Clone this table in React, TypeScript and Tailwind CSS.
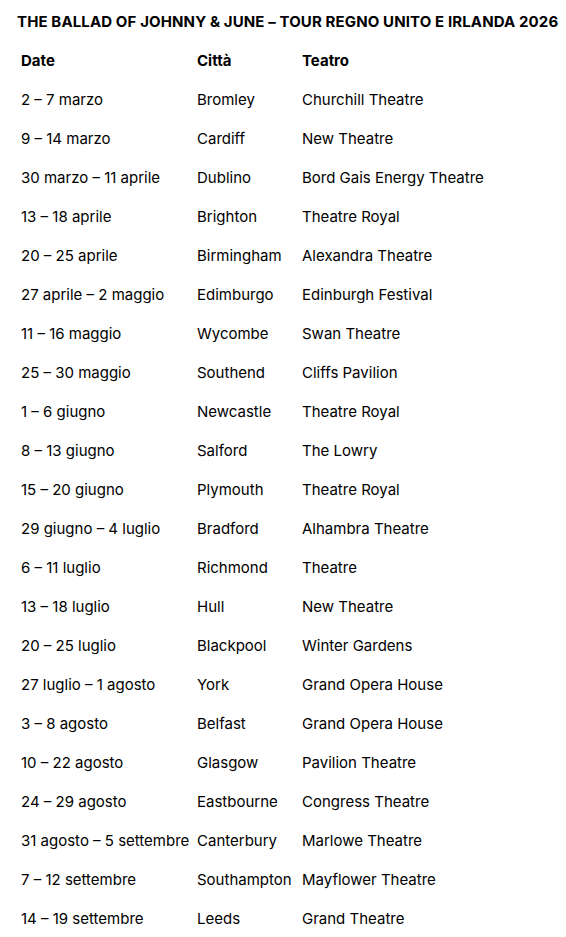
import React from 'react';

const tour: [string, string, string][] = [
    ['2 – 7 marzo', 'Bromley', 'Churchill Theatre'],
    ['9 – 14 marzo', 'Cardiff', 'New Theatre'],
    ['30 marzo – 11 aprile', 'Dublino', 'Bord Gais Energy Theatre'],
    ['13 – 18 aprile', 'Brighton', 'Theatre Royal'],
    ['20 – 25 aprile', 'Birmingham', 'Alexandra Theatre'],
    ['27 aprile – 2 maggio', 'Edimburgo', 'Edinburgh Festival'],
    ['11 – 16 maggio', 'Wycombe', 'Swan Theatre'],
    ['25 – 30 maggio', 'Southend', 'Cliffs Pavilion'],
    ['1 – 6 giugno', 'Newcastle', 'Theatre Royal'],
    ['8 – 13 giugno', 'Salford', 'The Lowry'],
    ['15 – 20 giugno', 'Plymouth', 'Theatre Royal'],
    ['29 giugno – 4 luglio', 'Bradford', 'Alhambra Theatre'],
    ['6 – 11 luglio', 'Richmond', 'Theatre'],
    ['13 – 18 luglio', 'Hull', 'New Theatre'],
    ['20 – 25 luglio', 'Blackpool', 'Winter Gardens'],
    ['27 luglio – 1 agosto', 'York', 'Grand Opera House'],
    ['3 – 8 agosto', 'Belfast', 'Grand Opera House'],
    ['10 – 22 agosto', 'Glasgow', 'Pavilion Theatre'],
    ['24 – 29 agosto', 'Eastbourne', 'Congress Theatre'],
    ['31 agosto – 5 settembre', 'Canterbury', 'Marlowe Theatre'],
    ['7 – 12 settembre', 'Southampton', 'Mayflower Theatre'],
    ['14 – 19 settembre', 'Leeds', 'Grand Theatre'],
];

export default function App() {
    return (
        <div className="min-h-screen bg-white text-black font-['Inter','Liberation_Sans',sans-serif] pt-[3px]">
            {/* Title */}
            <div className="h-[39px] flex items-center pl-[17px] text-[15px] font-bold tracking-[0.12px] whitespace-nowrap">
                THE BALLAD OF JOHNNY &amp; JUNE – TOUR REGNO UNITO E IRLANDA 2026
            </div>

            {/* Table */}
            <div className="pl-[21px] text-[15px]">
                <div className="grid grid-cols-[176px_105px_1fr] h-[39px] items-center font-bold">
                    <span>Date</span>
                    <span>Città</span>
                    <span>Teatro</span>
                </div>
                {tour.map(([date, city, venue]) => (
                    <div key={date} className="grid grid-cols-[176px_105px_1fr] h-[39px] items-center whitespace-nowrap">
                        <span>{date}</span>
                        <span>{city}</span>
                        <span>{venue}</span>
                    </div>
                ))}
            </div>
        </div>
    );
}
